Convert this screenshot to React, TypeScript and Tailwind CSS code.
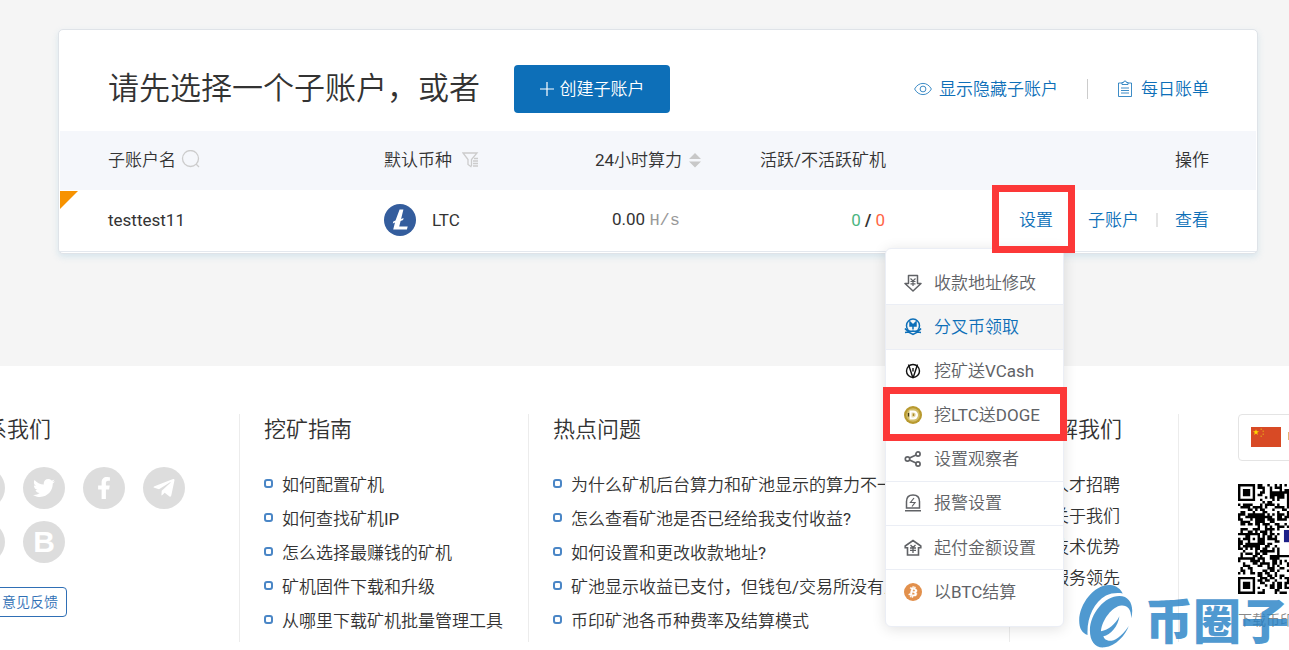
import { ReactNode } from 'react';
import { FaFacebookF, FaTelegramPlane, FaTwitter, FaWeibo, FaWeixin } from 'react-icons/fa';

type MenuItem = {
  label: string;
  icon: ReactNode;
  active?: boolean;
  marked?: boolean;
};

function EyeIcon() {
  return (
    <svg className="h-[18px] w-[18px]" viewBox="0 0 18 18" fill="none" stroke="currentColor" strokeWidth=".8">
      <path d="M.6 9C2.6 5.400 5.500 3.400 9 3.400S15.400 5.400 17.400 9c-2 3.600-4.900 5.600-8.400 5.600S2.600 12.600.6 9z" />
      <circle cx="9" cy="9" r="2.900" />
    </svg>
  );
}

function BillIcon() {
  return (
    <svg className="h-[18px] w-[16px]" viewBox="0 0 16 18" fill="none" stroke="currentColor" strokeWidth=".8">
      <path d="M5 3H1.500v13.500h13V3H11" />
      <path d="M5 4.500V2.500h1.500a1.500 1.500 0 0 1 3 0H11v2z" />
      <path d="M4 8h8M4 10.500h8M4 13h8" />
    </svg>
  );
}

function SearchIcon() {
  return (
    <svg className="h-5 w-5" viewBox="0 0 20 20" fill="none" stroke="#ccc" strokeWidth="1.300">
      <circle cx="9.500" cy="8.500" r="8" />
      <path d="M15 14l3 3" />
    </svg>
  );
}

function FilterIcon() {
  return (
    <svg className="h-[17px] w-[17px]" viewBox="0 0 17 17" fill="none" stroke="#ccc" strokeWidth="1.300">
      <path d="M9.500 15V8.500L15 2H1l5 6.500v5L9.500 16" />
      <path d="M12 7.500h4M11 10h5M11 12.500h5M11 15h5" />
    </svg>
  );
}

function SortIcon() {
  return (
    <svg className="h-4 w-3" viewBox="0 0 12 16" fill="#c8c8c8">
      <path d="M6 1l6 6H0zM6 15.500l6-6H0z" />
    </svg>
  );
}

function LtcIcon() {
  return (
    <svg className="h-8 w-8" viewBox="0 0 32 32">
      <circle cx="16" cy="16" r="16" fill="#345d9d" />
      <path
        fill="#fff"
        d="M15.600 5.500h3.800l-2.300 9.600 2.500-1-.5 2-2.500 1-1.400 5.500h8.500l-.8 3H9.200l1.800-7-2.200.8.5-2 2.200-.9z"
      />
    </svg>
  );
}

function PayoutIcon() {
  return (
    <svg className="h-[18px] w-[18px]" viewBox="0 0 18 18" fill="none" stroke="currentColor" strokeWidth="1.500">
      <path d="M4.500 1.500h9v8H17L9 17 1 9.500h3.500z" strokeLinejoin="round" />
      <path d="M6.500 4.500L9 7l2.500-2.500M9 7v5M6.500 7.500h5M6.500 9.800h5" strokeWidth="1.200" />
    </svg>
  );
}

function ForkCoinIcon() {
  return (
    <svg className="h-[18px] w-[18px]" viewBox="0 0 18 18" fill="none" stroke="currentColor" strokeWidth="1.500">
      <path d="M4.200 12A6.500 6.500 0 1 1 13.800 12" />
      <path d="M6 4l3 3 3-3v4H6zM9 7v4.500" fill="currentColor" />
      <path d="M1 10.500c2 3 5 3 8 2.500 3 .5 6 .5 8-2.500M1 14.500l3.500-.5L9 16.500l4.500-2.500 3.500.5" />
    </svg>
  );
}

function VcashIcon() {
  return (
    <svg className="h-[18px] w-[18px]" viewBox="0 0 18 18" fill="none" stroke="#111" strokeWidth="1.400">
      <circle cx="9" cy="9" r="6.500" />
      <path d="M4.500 2.500L8.800 15.500h.4L13.500 2.500M9 9.500V6" />
    </svg>
  );
}

function DogeIcon() {
  return (
    <svg className="h-[18px] w-[18px]" viewBox="0 0 18 18">
      <circle cx="9" cy="9" r="9" fill="#b8992e" />
      <circle cx="9" cy="9" r="6.800" fill="#d3bd68" />
      <path d="M5.500 4.500h4a4.500 4.500 0 0 1 0 9h-4z" fill="#fff" />
      <path d="M7.500 6.500v5h1.800a2.500 2.500 0 0 0 0-5z" fill="#e7d9a8" />
      <path d="M9.500 7.500v2.500" stroke="#a88a28" strokeWidth="1.500" />
      <path d="M4.500 7v3.500" stroke="#443a18" strokeWidth="1.300" />
    </svg>
  );
}

function ShareIcon() {
  return (
    <svg className="h-[18px] w-[18px]" viewBox="0 0 18 18" fill="none" stroke="currentColor" strokeWidth="1.700">
      <circle cx="3.500" cy="9" r="2.200" />
      <circle cx="14" cy="4" r="2.100" />
      <circle cx="14" cy="14" r="2.100" />
      <path d="M5.500 8l6.500-3M5.500 10l6.500 3" />
    </svg>
  );
}

function AlarmIcon() {
  return (
    <svg className="h-[18px] w-[18px]" viewBox="0 0 18 18" fill="none" stroke="currentColor" strokeWidth="1.500">
      <path d="M2.500 14V7.500C2.500 3.500 5 1 9 1s6.500 2.500 6.500 6.500V14zM1 16.800h16" />
      <path d="M10 4L6.500 8.500h4.500L8 12.500" strokeWidth="1.200" />
    </svg>
  );
}

function ThresholdIcon() {
  return (
    <svg className="h-[18px] w-[18px]" viewBox="0 0 18 18" fill="none" stroke="currentColor" strokeWidth="1.600">
      <path d="M3.500 8.800H1.200V7L9 1.500 16.800 7v1.800h-2.300V16h-11z" />
      <path d="M6.500 6L9 8.500 11.500 6M9 8.500V14M6 9h6M6 11.300h6" strokeWidth="1.300" />
    </svg>
  );
}

function BtcIcon() {
  return (
    <svg className="h-[18px] w-[18px]" viewBox="0 0 32 32">
      <circle cx="16" cy="16" r="16" fill="#e2904c" />
      <path
        fill="#fff"
        stroke="#fff"
        strokeWidth=".8"
        d="M23.189 14.020c.314-2.096-1.283-3.223-3.465-3.975l.708-2.840-1.728-.430-.690 2.765c-.454-.114-.920-.220-1.385-.326l.695-2.783L15.596 6l-.708 2.839c-.376-.086-.746-.170-1.104-.260l.002-.009-2.384-.595-.460 1.846s1.283.294 1.256.312c.700.175.826.638.805 1.006l-.806 3.235c.048.012.110.030.180.057l-.183-.045-1.130 4.532c-.086.212-.303.531-.793.410.018.025-1.256-.313-1.256-.313l-.858 1.978 2.250.561c.418.105.828.215 1.231.318l-.715 2.872 1.727.430.708-2.840c.472.127.930.245 1.378.357l-.706 2.828 1.728.430.715-2.866c2.948.558 5.164.333 6.097-2.333.752-2.146-.037-3.385-1.588-4.192 1.130-.260 1.980-1.003 2.207-2.538zm-3.950 5.538c-.533 2.147-4.148.986-5.320.695l.950-3.805c1.172.293 4.929.872 4.370 3.110zm.535-5.569c-.487 1.953-3.495.960-4.470.717l.860-3.450c.975.243 4.118.696 3.610 2.733z"
      />
    </svg>
  );
}

function FlagIcon() {
  return (
    <svg className="h-5 w-[30px] shrink-0" viewBox="0 0 30 20">
      <path d="M0 0h30v20H0z" fill="#d84a25" />
      <path d="M5 2.200l.8 2.100H8L6.200 5.700l.7 2.200L5 6.600 3.100 7.900l.7-2.200L2 4.300h2.200z" fill="#ffd800" />
      <path d="M9.500 1.500h1.500V3H9.500zM11.500 3.500H13V5h-1.500zM11.500 6.500H13V8h-1.500zM9.500 8.500H11V10H9.500z" fill="#e08a1c" />
    </svg>
  );
}

const QR_SIZE = 45;

function inSquare(x: number, y: number, cx: number, cy: number, r: number) {
  const d = Math.max(Math.abs(x - cx), Math.abs(y - cy));
  if (d > r) return null;
  // rings alternate, the one just inside a finder's frame is light
  return r === 4 ? d === 3 || d < 2 : d !== 1;
}

function qrModule(x: number, y: number) {
  const fixed = [
    inSquare(x, y, 3, 3, 4),
    inSquare(x, y, QR_SIZE - 4, 3, 4),
    inSquare(x, y, 3, QR_SIZE - 4, 4),
    inSquare(x, y, 6, 22, 2),
    inSquare(x, y, 22, 6, 2),
    inSquare(x, y, 38, 38, 2),
  ].find((v) => v !== null);
  if (fixed !== undefined) return fixed;
  if (x > 16 && x < 28 && y > 17 && y < 28) return false;
  const n = Math.sin(x * 12.9898 + y * 78.233) * 43758.5453;
  return n - Math.floor(n) < 0.54;
}

function QrCode() {
  let path = '';
  for (let y = 0; y < QR_SIZE; y++) {
    for (let x = 0; x < QR_SIZE; x++) {
      if (qrModule(x, y)) path += `M${x} ${y}h1v1h-1z`;
    }
  }
  return (
    <svg className="h-[110px] w-[110px]" viewBox="0 0 45 45" role="img" aria-label="QR">
      <path d={path} fill="#000" />
      <path d="M18.800 18.800h8v5h-8z" fill="#1d2088" />
    </svg>
  );
}

const menuItems: MenuItem[] = [
  { label: '收款地址修改', icon: <PayoutIcon /> },
  { label: '分叉币领取', icon: <ForkCoinIcon />, active: true },
  { label: '挖矿送VCash', icon: <VcashIcon /> },
  { label: '挖LTC送DOGE', icon: <DogeIcon />, marked: true },
  { label: '设置观察者', icon: <ShareIcon /> },
  { label: '报警设置', icon: <AlarmIcon /> },
  { label: '起付金额设置', icon: <ThresholdIcon /> },
  { label: '以BTC结算', icon: <BtcIcon /> },
];

const guides = ['如何配置矿机', '如何查找矿机IP', '怎么选择最赚钱的矿机', '矿机固件下载和升级', '从哪里下载矿机批量管理工具'];

const questions = [
  '为什么矿机后台算力和矿池显示的算力不一样?',
  '怎么查看矿池是否已经给我支付收益?',
  '如何设置和更改收款地址?',
  '矿池显示收益已支付，但钱包/交易所没有入账?',
  '币印矿池各币种费率及结算模式',
];

const about = ['人才招聘', '关于我们', '技术优势', '服务领先'];

const socials = [
  { name: 'Weibo', icon: <FaWeibo className="h-6 w-6" /> },
  { name: 'Twitter', icon: <FaTwitter className="h-[22px] w-[22px]" /> },
  { name: 'Facebook', icon: <FaFacebookF className="h-[22px] w-[22px]" /> },
  { name: 'Telegram', icon: <FaTelegramPlane className="h-6 w-6" /> },
  { name: 'WeChat', icon: <FaWeixin className="h-6 w-6" /> },
  { name: 'Bihu', icon: <span className="font-[Liberation_Sans] text-[30px] font-bold">B</span> },
];

function SettingsMenu() {
  return (
    <ul className="absolute -left-[134px] top-[40px] z-10 grid h-[379px] w-[179px] grid-rows-8 rounded-md border border-[#ebeef5] bg-white py-3 text-left shadow-[0_2px_14px_rgba(0,0,0,0.12)]">
      {menuItems.map((item) => (
        <li key={item.label} className="relative border-b border-[#ebeef5] last:border-b-0">
          <a
            href="#"
            className={
              item.active
                ? 'flex h-full items-center gap-3 bg-[#f5f5f5] pl-[18px] text-[#0d6fb8]'
                : 'flex h-full items-center gap-3 pl-[18px] text-[#606266]'
            }
          >
            {item.icon}
            {item.label}
          </a>
          {item.marked && (
            <span className="pointer-events-none absolute -left-[3px] -right-1 -top-[7px] h-[54px] border-[7px] border-[#fc3838]" />
          )}
        </li>
      ))}
    </ul>
  );
}

function LinkColumn({ title, links, dense }: { title: string; links: string[]; dense?: boolean }) {
  return (
    <>
      <h3 className="text-[22px] leading-8">{title}</h3>
      <ul className={dense ? 'mt-6 leading-[31px]' : 'mt-[22px] leading-[34px]'}>
        {links.map((link) => (
          <li key={link} className="flex items-center gap-[9px] whitespace-nowrap">
            <span className="mb-[2px] h-[9px] w-[9px] rounded-[3px] border-2 border-[#4a86c6]" />
            <a href="#">{link}</a>
          </li>
        ))}
      </ul>
    </>
  );
}

function Watermark() {
  return (
    <div className="pointer-events-none absolute right-0 bottom-0 flex items-center gap-3 text-[#2480c5] opacity-80">
      <svg className="h-[63px] w-[54px]" viewBox="15 14 160 188" fill="currentColor">
        <path d="M145 39C134 18 116 14 104 14 60 14 15 70 15 120c0 24 9 38 25 43-3-50 18-98 55-118 14-7 34-9 50-6z" />
        <path d="M170 114c10-36-3-67-35-67-44 0-88 53-88 102 0 34 16 54 44 51 34-5 62-36 72-64-26 38-47 46-60 44-9-1-14-6-16-13 22-4 44-30 48-60-12 24-32 40-55 45 3-34 34-75 61-77 19-1 30 13 29 39z" />
      </svg>
      <span className="w-[144px] pt-1 font-['Noto_Sans_CJK_SC',sans-serif] text-[48px] leading-[63px] font-black whitespace-nowrap">
        币圈子
      </span>
    </div>
  );
}

export default function App() {
  return (
    <div className="relative overflow-hidden bg-[#f5f5f5] font-[Roboto,'Noto_Sans_CJK_SC_DemiLight','Noto_Sans_CJK_SC',sans-serif] text-[17px] leading-6 font-normal text-[#333]">
      <main className="pt-[29px] pr-[31px] pb-[112px] pl-[58px]">
        <section className="rounded-[5px] border border-[#dfe3e8] bg-white px-px pb-px shadow-[0_3px_6px_rgba(150,195,220,0.3)]">
          <header className="flex h-[101px] items-center justify-between pt-[17px] pr-[47px] pb-px pl-12">
            <div className="flex items-center gap-[34px]">
              <h1 className="text-[31px] leading-10">请先选择一个子账户，或者</h1>
              <button className="flex h-12 w-[156px] items-center justify-center gap-[6px] rounded bg-[#0d6fb8] text-white">
                <svg className="h-[14px] w-[14px]" viewBox="0 0 14 14" stroke="currentColor" strokeWidth="1.200">
                  <path d="M7 0v14M0 7h14" />
                </svg>
                创建子账户
              </button>
            </div>
            <div className="flex items-center text-[#0d6fb8]">
              <a href="#" className="flex items-center gap-[7px]">
                <EyeIcon />
                显示隐藏子账户
              </a>
              <span className="mx-[29px] h-5 w-px bg-[#ccc]" />
              <a href="#" className="flex items-center gap-2">
                <BillIcon />
                每日账单
              </a>
            </div>
          </header>

          <table className="w-full table-fixed text-left">
            <colgroup>
              <col className="w-[324px]" />
              <col className="w-[211px]" />
              <col className="w-[165px]" />
              <col className="w-[130px]" />
              <col />
            </colgroup>
            <thead className="bg-[#f5f7fb]">
              <tr className="h-[59px]">
                <th className="pb-[2px] pl-12 font-normal">
                  <div className="flex items-center gap-[5px]">
                    子账户名
                    <SearchIcon />
                  </div>
                </th>
                <th className="pb-[2px] font-normal">
                  <div className="flex items-center gap-[10px]">
                    默认币种
                    <FilterIcon />
                  </div>
                </th>
                <th className="pb-[2px] font-normal">
                  <div className="flex items-center gap-[7px]">
                    24小时算力
                    <SortIcon />
                  </div>
                </th>
                <th className="pb-[2px] font-normal">活跃/不活跃矿机</th>
                <th className="pr-[47px] pb-[2px] text-right font-normal">操作</th>
              </tr>
            </thead>
            <tbody>
              <tr className="h-[61px] border-b border-[#e4e8ee]">
                <td className="relative pl-12">
                  <svg className="absolute top-px left-0 h-[18px] w-[18px]" viewBox="0 0 18 18">
                    <path d="M0 0h18L0 18z" fill="#f79200" />
                  </svg>
                  testtest11
                </td>
                <td>
                  <div className="flex items-center gap-4">
                    <LtcIcon />
                    LTC
                  </div>
                </td>
                <td>
                  <div className="w-[85px] text-right whitespace-nowrap">
                    0.00 <span className="font-['Liberation_Mono'] text-[#999]">H/s</span>
                  </div>
                </td>
                <td>
                  <div className="w-[125px] text-right">
                    <span className="text-[#4bb57f]">0</span> <b>/</b> <span className="text-[#ff6444]">0</span>
                  </div>
                </td>
                <td className="pr-[47px]">
                  <div className="flex items-center justify-end text-[#0d6fb8]">
                    <div className="relative mr-[35px]">
                      <button className="block">设置</button>
                      <SettingsMenu />
                      <span className="pointer-events-none absolute -top-[23px] -left-[27px] z-20 h-[68px] w-[83px] border-[7px] border-[#fc3838]" />
                    </div>
                    <a href="#">子账户</a>
                    <span className="mx-[17px] h-[14px] w-[2px] bg-[#e4e4e4]" />
                    <a href="#">查看</a>
                  </div>
                </td>
              </tr>
            </tbody>
          </table>
        </section>
      </main>

      <footer className="flex justify-center bg-white pt-12 pb-2">
        <div className="w-[301px] shrink-0 border-r border-[#ececec] pl-6">
          <h3 className="text-[22px] leading-8">联系我们</h3>
          <div className="mt-[21px] flex w-[222px] flex-wrap gap-x-[18px] gap-y-3">
            {socials.map((s) => (
              <a
                key={s.name}
                href="#"
                aria-label={s.name}
                className="flex h-[42px] w-[42px] items-center justify-center rounded-full bg-[#ddd] text-white"
              >
                {s.icon}
              </a>
            ))}
          </div>
          <button className="mt-6 h-[30px] w-[104px] rounded border border-[#2f6fb5] pr-2 text-right text-sm text-[#2f6fb5]">
            意见反馈
          </button>
        </div>
        <div className="h-[228px] w-[289px] shrink-0 border-r border-[#ececec] pl-6">
          <LinkColumn title="挖矿指南" links={guides} />
        </div>
        <div className="w-[481px] shrink-0 border-r border-[#ececec] pl-6">
          <LinkColumn title="热点问题" links={questions} />
        </div>
        <div className="w-[169px] shrink-0 border-r border-[#ececec] pl-6">
          <LinkColumn title="了解我们" links={about} dense />
        </div>
        <div className="flex w-[171px] shrink-0 flex-col items-start pl-[59px]">
          <button className="flex h-[47px] w-[110px] items-center gap-[6px] rounded border border-[#e4e4e4] pl-3">
            <FlagIcon />
            中文
          </button>
          <div className="mt-[23px]">
            <QrCode />
          </div>
          <p className="mt-4 text-sm whitespace-nowrap text-[#888]">下载币印App</p>
        </div>
      </footer>
      <Watermark />
    </div>
  );
}
